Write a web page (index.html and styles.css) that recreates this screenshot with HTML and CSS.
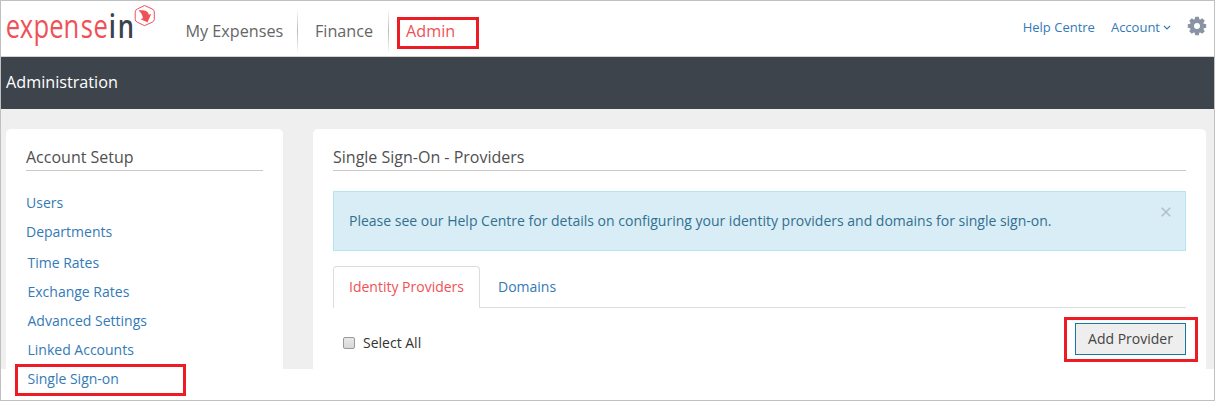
FILE: index.html
```
<!DOCTYPE html>
<html lang="en">
<head>
<meta charset="utf-8">
<title>Single Sign-On - Providers</title>
<link rel="stylesheet" href="styles.css">
</head>
<body>
<div class="window">
  <header class="header">
    <svg class="logo" width="156" height="55" viewBox="0 0 156 55" aria-label="expensein">
      <g transform="scale(.8 1)">
        <text class="logo-expense" x="6 23.4 40.600 60.200 78.100 99.600 115.500" y="37.300">expense</text>
        <text class="logo-in" x="134.800 145.800" y="37.300">in</text>
      </g>
      <path d="M143.500 4.500l7.500 3.400q2.300 1 2.300 3v7.400q0 2-2.300 3l-7.500 3.400-7-3.400q-2.300-1-2.300-3v-7.400q0-2 2.300-3z" fill="#fff" stroke="#ef5156" stroke-width="1"/>
      <path d="M137.500 9.500c5-.5 9.500 0 10.300 4.200l2.400-.8-3.700 8.300-7-3 2.400-1c-.3-3.200-1.500-5.200-4.400-7.700z" fill="#ef5156"/>
    </svg>
    <nav class="nav">
      <a class="nav-item expenses">My Expenses</a>
      <a class="nav-item finance">Finance</a>
      <a class="nav-item admin">Admin</a>
    </nav>
    <div class="tools">
      <a class="help">Help Centre</a>
      <a class="account">Account</a>
      <svg class="caret" width="8" height="6" viewBox="0 0 8 6"><path d="M1 1l3 3 3-3" fill="none" stroke="#337ab7" stroke-width="1.100"/></svg>
      <svg class="gear" width="20" height="20" viewBox="-10 -10 20 20">
        <g fill="#8a93a1">
          <path fill-rule="evenodd" d="M0-7A7 7 0 1 1 0 7A7 7 0 1 1 0-7zM0-3A3 3 0 1 0 0 3A3 3 0 1 0 0-3z"/>
          <path id="teeth" d="M-2.500-6l.7-3.200h3.600L2.500-6zM-2.500 6l.7 3.200h3.600L2.500 6zM-6-2.500l-3.200.7v3.600L-6 2.500zM6-2.500l3.200.7v3.600L6 2.500z"/>
          <use href="#teeth" transform="rotate(45)"/>
        </g>
      </svg>
    </div>
  </header>
  <div class="banner">Administration</div>
  <div class="content">
    <aside class="panel sidebar">
      <h2 class="title">Account Setup</h2>
      <ul class="menu">
        <li>Users</li>
        <li>Departments</li>
        <li class="inset first">Time Rates</li>
        <li class="inset">Exchange Rates</li>
        <li class="inset">Advanced Settings</li>
        <li class="inset">Linked Accounts</li>
        <li class="inset current">Single Sign-on</li>
      </ul>
    </aside>
    <main class="panel main">
      <h2 class="title">Single Sign-On - Providers</h2>
      <div class="alert">
        <span class="alert-text">Please see our Help Centre for details on configuring your identity providers and domains for single sign-on.</span>
        <svg class="close" width="10" height="10" viewBox="0 0 10 10"><path d="M.7.7l8.600 8.600M9.300.7L.7 9.300" stroke="#aebfc9" stroke-width="1.500"/></svg>
      </div>
      <div class="tabs">
        <a class="tab active">Identity Providers</a>
        <a class="tab">Domains</a>
      </div>
      <div class="actions">
        <label class="select"><span class="box"></span>Select All</label>
        <div class="marker"><button class="add">Add Provider</button></div>
      </div>
    </main>
  </div>
</div>
</body>
</html>
```
FILE: styles.css
```
* { box-sizing: border-box; }
body { margin: 0; background: #fff; color: #333; font: 14px/20px "Open Sans", "Noto Sans", sans-serif; }
.window { width: 1215px; height: 401px; border: 1px solid #c0c0c0; overflow: hidden; }

.header { display: flex; height: 56px; border-bottom: 1px solid #d4d4d4; }
.logo { flex: none; }
.logo-expense, .logo-in { font-family: "Open Sans", sans-serif; font-size: 32px; }
.logo-expense { fill: #ef5156; }
.logo-in { fill: #3a424d; font-weight: 600; }

.nav { display: flex; margin-left: 11px; padding-top: 8px; font-size: 16.2px; color: #666; }
.nav-item { height: 44px; line-height: 44px; white-space: nowrap; }
.expenses, .finance { border-right: 1px solid; border-image: linear-gradient(#fff, #bbb, #fff) 1; }
.expenses { width: 130px; padding-left: 17.500px; }
.finance { width: 91px; padding-left: 17px; }
.admin { width: 82px; height: 32px; margin: 8px 0 0 8px; padding-left: 6px; border: 3px solid #ed1c24; line-height: 22px; color: #ef5156; }

.tools { display: flex; margin-left: auto; font-size: 13px; color: #337ab7; }
.help, .account { margin-top: 16px; }
.account { margin-left: 16px; }
.caret { margin: 24px 0 0 3px; }
.gear { margin: 15px 7px 0 16px; }

.banner { height: 52px; padding-left: 5px; background: #3e444c; color: #fff; font-size: 16.2px; line-height: 50px; }
.content { display: flex; gap: 30px; height: 291px; padding: 20px 8px 0 5px; background: linear-gradient(#efefef 260px, #fff 260px); }
.panel { padding: 0 20px; border-radius: 5px 5px 0 0; background: #fff; }
.sidebar { width: 277px; }
.main { width: 893px; }
.title { height: 42px; margin: 0; padding-top: 18px; border-bottom: 1px solid #c8c8c8; font-size: 16px; font-weight: 400; line-height: 20px; color: #505050; }

.menu { margin: 18px 0 0; padding: 0; list-style: none; color: #337ab7; }
.menu li { height: 29px; line-height: 28px; }
.menu .inset { padding-left: 1.5px; }
.menu .first { margin-top: 2px; }
.menu .current { width: 171px; height: 32px; margin: -1px 0 0 -11px; padding-left: 9.5px; border: 3px solid #ed1c24; line-height: 24px; }

.alert { display: flex; justify-content: space-between; height: 60px; margin-top: 20px; padding: 0 14px 0 15px; border: 1px solid #b5e5ee; background: #d9edf7; color: #31708f; line-height: 58px; }
.close { margin-top: 15px; }
.tabs { display: flex; height: 42px; margin-top: 15px; border-bottom: 1px solid #ddd; }
.tab { padding: 1px 18px 0; color: #337ab7; line-height: 40px; }
.active { width: 147px; height: 42px; padding: 0 15px; border: 1px solid #ddd; border-bottom: 0; border-radius: 4px 4px 0 0; background: #fff; color: #ef5156; }
.actions { display: flex; justify-content: space-between; padding: 9px 0 0 10px; }
.select { display: flex; height: 20px; margin-top: 16px; }
.box { width: 12px; height: 12px; margin: 4px 8px 0 0; border: 1px solid #999; border-radius: 2px; background: linear-gradient(#e8e8e8, #d8d8d8); }
.marker { width: 134px; height: 45px; margin-right: -12px; padding: 3px 8px; border: 3px solid #ed1c24; }
.add { width: 111px; height: 32px; padding: 0; border: 1px solid #157ba5; background: #eee; color: #444; font: 14px/28px "Open Sans", sans-serif; }
```
